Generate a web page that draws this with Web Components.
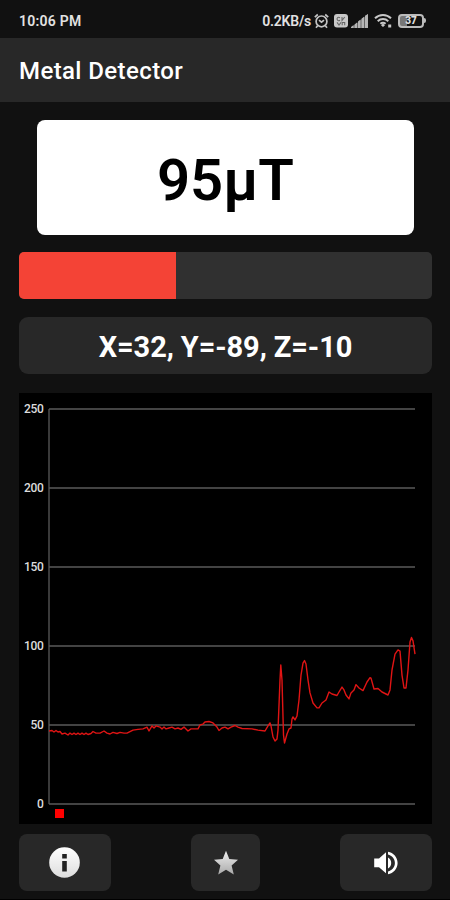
<!DOCTYPE html>
<html lang="en">
  <head>
    <meta charset="UTF-8" />
    <title>Metal Detector</title>
    <style>
      body {
        margin: 0;
        background: #111;
        color: white;
        font-family: Roboto, "Liberation Sans", sans-serif;
      }
    </style>
  </head>
  <body>
    <detector-app>
      <status-bar slot="status" speed="0.2KB/s" battery="37">10:06 PM</status-bar>
      <app-bar slot="title">Metal Detector</app-bar>
      <field-reading>95µT</field-reading>
      <level-bar value="95" max="250"></level-bar>
      <axis-values>X=32, Y=-89, Z=-10</axis-values>
      <field-chart></field-chart>
      <tool-button slot="tools" icon="info"></tool-button>
      <tool-button slot="tools" icon="star" class="small"></tool-button>
      <tool-button slot="tools" icon="sound"></tool-button>
    </detector-app>
    <script>
      class BaseElement extends HTMLElement {
        constructor() {
          super();
          this.attachShadow({ mode: "open" });
        }
        connectedCallback() {
          this.shadowRoot.innerHTML = this.render();
        }
      }

      class DetectorApp extends BaseElement {
        render() {
          return `
          <style>
            :host {
              display: flex;
              flex-direction: column;
              box-sizing: border-box;
              height: 900px;
              border-bottom: 1px solid black;
            }
            main {
              display: flex;
              flex-direction: column;
              padding: 18px 18px 0 19px;
            }
            footer {
              display: flex;
              justify-content: space-between;
              padding: 10px 18px 0 19px;
            }
          </style>
          <slot name="status"></slot>
          <slot name="title"></slot>
          <main><slot></slot></main>
          <footer><slot name="tools"></slot></footer>`;
        }
      }

      class StatusBar extends BaseElement {
        render() {
          return `
          <style>
            :host {
              display: flex;
              align-items: center;
              justify-content: space-between;
              box-sizing: border-box;
              height: 38px;
              padding: 3px 24px 0 19px;
              font-size: 14px;
              font-weight: 600;
              color: #e2e2e2;
            }
            .right {
              display: flex;
              align-items: center;
            }
            .time { letter-spacing: 0.25px; }
            .speed { margin-right: 3px; letter-spacing: -0.2px; }
            svg { display: block; }
            .alarm { margin-right: 5px; }
            .sim { margin-right: 3px; }
            .signal { margin-right: 6px; }
            .wifi { margin-right: 6px; }
            .battery {
              display: flex;
              align-items: center;
            }
            .battery b {
              display: flex;
              align-items: center;
              justify-content: center;
              box-sizing: border-box;
              width: 26px;
              height: 14px;
              padding: 0 4px;
              border: 2px solid #bbb;
              border-radius: 4px;
              font-size: 10px;
              line-height: 10px;
              color: #ddd;
              background: linear-gradient(90deg, #777 32%, transparent 32%);
            }
            .battery::after {
              content: "";
              width: 2px;
              height: 5px;
              border-radius: 0 2px 2px 0;
              background: #bbb;
            }
          </style>
          <span class="time"><slot></slot></span>
          <div class="right">
            <span class="speed">${this.getAttribute("speed")}</span>
            <svg class="alarm" width="15" height="16" viewBox="0 0 15 16" fill="none" stroke="#c4c4c4" stroke-width="1.7">
              <circle cx="7.5" cy="8.4" r="5.4"/>
              <path d="M.8 4.2 3.8 1.5M14.2 4.2 11.2 1.5M3.6 12.8 2 14.8M11.4 12.8 13 14.8M5 7.2 7.5 9.2 10 7.2"/>
            </svg>
            <svg class="sim" width="14" height="14" viewBox="0 0 14 14">
              <rect width="14" height="13.5" rx="3" fill="#c8c8c8"/>
              <path d="M6 3.8C4 2.4 2.6 4 3.2 5.6S5 7 6 6.2M8 3v3.4L10.8 3M3 8.4l2 2.6 2-2.6M8.2 11.2V8.5h2.5v2.7" fill="none" stroke="#666" stroke-width="1.1"/>
            </svg>
            <svg class="signal" width="17" height="14" viewBox="0 0 17 14" fill="#b5b5b5">
              <path d="M0 14 17 0v14z" fill="#666"/>
              <path d="M0 13 2.6 11v3H0zM3.5 10.500 6 8.500V14H3.500zM7 7.500 9.500 5.500V14H7zM10.500 4.800 13 2.700V14h-2.500zM14 1.800 17 0v14h-3z"/>
            </svg>
            <svg class="wifi" width="18" height="15" viewBox="0 0 18 15" fill="none" stroke="#c8c8c8" stroke-width="2">
              <path d="M1 5.3C5.5 1 12.5 1 17 5.3M3.7 8.2c3-2.8 7.6-2.8 10.6 0M6.4 10.8c1.5-1.3 3.7-1.3 5.2 0"/>
              <path d="M9 10.5 11 12.3 9 14 7 12.3zM14.2 11.5h3v3h-3z" fill="#c8c8c8" stroke="none"/>
            </svg>
            <div class="battery"><b>${this.getAttribute("battery")}</b></div>
          </div>`;
        }
      }

      class AppBar extends BaseElement {
        render() {
          return `
          <style>
            :host {
              display: flex;
              align-items: center;
              box-sizing: border-box;
              height: 64px;
              padding: 2px 19px 0;
              background: #282828;
              font-size: 24px;
              font-weight: 500;
              letter-spacing: 0.4px;
            }
          </style>
          <span><slot></slot></span>`;
        }
      }

      class FieldReading extends BaseElement {
        render() {
          return `
          <style>
            :host {
              display: flex;
              align-items: center;
              justify-content: center;
              box-sizing: border-box;
              height: 115px;
              margin: 0 18px;
              padding-top: 4px;
              border-radius: 8px;
              background: white;
              color: black;
              font-size: 58px;
              font-weight: 600;
            }
          </style>
          <span><slot></slot></span>`;
        }
      }

      class LevelBar extends BaseElement {
        render() {
          const percent = (this.getAttribute("value") / this.getAttribute("max")) * 100;
          return `
          <style>
            :host {
              display: block;
              height: 47px;
              margin-top: 17px;
              border-radius: 5px;
              overflow: hidden;
              background: #303030;
            }
            div {
              width: ${percent}%;
              height: 100%;
              background: #f44336;
            }
          </style>
          <div></div>`;
        }
      }

      class AxisValues extends BaseElement {
        render() {
          return `
          <style>
            :host {
              display: flex;
              align-items: center;
              justify-content: center;
              box-sizing: border-box;
              height: 57px;
              margin-top: 18px;
              padding-top: 3px;
              border-radius: 9px;
              background: #282828;
              font-size: 29px;
              font-weight: 700;
              letter-spacing: -0.1px;
            }
          </style>
          <span><slot></slot></span>`;
        }
      }

      // [offset along the time axis, field strength in µT]
      const samples = [
        [0, 46.2], [3, 46.5], [5, 45.6], [7, 46.5], [9, 45.6], [11, 45.9], [13, 44.3],
        [16, 44.9], [19, 43.7], [21, 44.9], [23, 44], [25, 44.9], [27, 44], [29, 44.9],
        [31, 44], [33, 44.9], [35, 44], [37, 44.9], [39, 44], [42, 44.6], [44, 45.9],
        [47, 44.9], [51, 44.9], [55, 46.2], [58, 44.9], [61, 44.3], [64, 45.3],
        [68, 44.6], [71, 45.3], [75, 44.9], [78, 44.9], [84, 46.8], [89, 47.2],
        [94, 47.5], [98, 48.7], [100, 46.2], [103, 49.4], [105, 48.1], [107, 49.4],
        [111, 48.7], [113, 47.5], [115, 48.7], [117, 47.5], [120, 48.1], [123, 48.7],
        [126, 47.5], [129, 48.1], [132, 47.2], [135, 48.7], [139, 46.2], [142, 47.5],
        [149, 47.5], [151, 50], [154, 50.6], [156, 51.9], [160, 52.2], [164, 51.3],
        [168, 48.7], [170, 46.5], [173, 48.1], [176, 48.7], [179, 47.5], [182, 48.7],
        [186, 49.7], [189, 48.7], [193, 47.8], [203, 47.5], [209, 46.8], [216, 46.2],
        [219, 49.4], [221, 51.3], [222, 49.4], [224, 42.4], [226, 39.9], [228, 41.2],
        [229, 46.8], [231, 78.5], [231.8, 88], [233, 78.5], [234.5, 43.7], [235.5, 38.6],
        [238, 44.3], [240, 47.5], [242, 48.1], [243, 53.8], [244, 55.1], [246, 53.2],
        [248, 55.7], [250, 65.8], [252, 81.6], [254, 89.2], [255.5, 90.8], [257, 88.6],
        [259, 78.5], [261, 70.3], [264, 63.9], [268, 60.8], [270, 60.8], [273, 63.9],
        [277, 65.8], [280, 70.9], [283, 69.6], [288, 68.7], [290, 70.9], [293, 74],
        [295, 72.2], [297, 69], [300, 66.5], [302, 70.3], [305, 72.2], [307, 75.6],
        [310, 73.4], [314, 71.8], [318, 77.2], [321, 80], [322, 79.7], [325, 72.8],
        [329, 73.1], [333, 70.9], [339, 69], [341, 72.2], [343, 84.8], [346, 94.9],
        [349, 97.5], [351, 96.8], [353, 81.6], [355, 73.4], [357, 73.4], [359, 84.8],
        [361, 102.5], [362.5, 105.4], [364, 103.2], [366, 94.9],
      ];

      class FieldChart extends BaseElement {
        render() {
          const y = (value) => 395 - value * 1.58;
          const grid = [0, 50, 100, 150, 200, 250]
            .map(
              (value) => `
              <path class="grid" d="M0 ${y(value)}H366"/>
              <text x="-5.5" y="${y(value) + 4}">${value}</text>`
            )
            .join("");
          const line = samples.map(([x, value]) => `${x},${y(value).toFixed(1)}`).join(" ");
          return `
          <style>
            :host {
              display: block;
              height: 431px;
              margin-top: 19px;
              background: black;
            }
            svg { display: block; }
            .grid { stroke: #5a5a5a; stroke-width: 1.3; }
            text {
              fill: #ddd;
              font-size: 12px;
              font-weight: 500;
              letter-spacing: -0.3px;
              text-anchor: end;
            }
            polyline {
              fill: none;
              stroke: #e01414;
              stroke-width: 1.4;
              stroke-linejoin: round;
            }
          </style>
          <svg width="413" height="431" viewBox="-30 -16 413 431">
            ${grid}
            <path class="grid" d="M0 0V395"/>
            <polyline points="${line}"/>
            <rect x="6" y="400" width="9" height="9" fill="red"/>
          </svg>`;
        }
      }

      const icons = {
        info: `
          <svg width="32" height="32" viewBox="0 0 32 32">
            <linearGradient id="g" x2="0" y2="1"><stop stop-color="#fff"/><stop offset="1" stop-color="#ddd"/></linearGradient>
            <circle cx="15.5" cy="15.500" r="15.3" fill="url(#g)"/>
            <path d="M13.200 7h4.600v4.500h-4.600zM13.200 14h4.600v10.500h-4.600z" fill="#222"/>
          </svg>`,
        star: `
          <svg width="26" height="26" viewBox="0 0 26 26">
            <linearGradient id="g" x2="0" y2="1"><stop stop-color="#eee"/><stop offset="1" stop-color="#aaa"/></linearGradient>
            <path d="M13 .8 16.300 9 25 9.800 18.600 15.500 20.800 24.400 13 19.800 5.200 24.400 7.400 15.500 1 9.800 9.700 9z" fill="url(#g)"/>
          </svg>`,
        sound: `
          <svg width="26" height="26" viewBox="0 0 26 26" fill="#fff">
            <path d="M1.2 8.600H6L13 2.3V23.3L6 17.200H1.2z"/>
            <path d="M15 7.6c2 1 3.2 3 3.2 5.4s-1.2 4.4-3.2 5.4z"/>
            <path d="M15 1.7c5.4.9 9.6 5.6 9.6 11.3s-4.2 10.4-9.6 11.3v-2.800c3.900-1 6.900-4.400 6.900-8.500s-3-7.500-6.900-8.500z"/>
          </svg>`,
      };

      class ToolButton extends BaseElement {
        render() {
          return `
          <style>
            :host {
              display: flex;
              align-items: center;
              justify-content: center;
              width: 92px;
              height: 57px;
              border-radius: 8px;
              background: #282828;
            }
            :host(.small) { width: 69px; }
            svg { display: block; }
          </style>
          ${icons[this.getAttribute("icon")]}`;
        }
      }

      window.customElements.define("detector-app", DetectorApp);
      window.customElements.define("status-bar", StatusBar);
      window.customElements.define("app-bar", AppBar);
      window.customElements.define("field-reading", FieldReading);
      window.customElements.define("level-bar", LevelBar);
      window.customElements.define("axis-values", AxisValues);
      window.customElements.define("field-chart", FieldChart);
      window.customElements.define("tool-button", ToolButton);
    </script>
  </body>
</html>
